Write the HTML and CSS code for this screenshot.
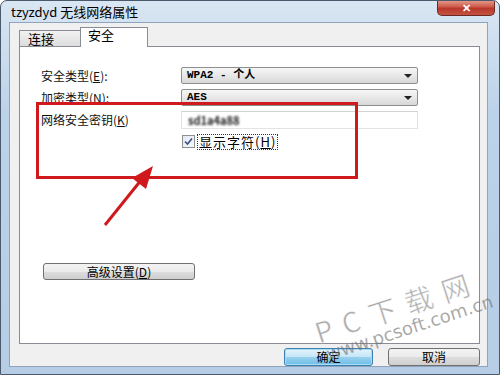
FILE: index.html
```html
<!DOCTYPE html>
<html lang="zh-CN">
<head>
    <meta charset="UTF-8">
    <title>tzyzdyd 无线网络属性</title>
    <link rel="stylesheet" href="styles.css">
</head>
<body>
    <div class="window">
        <div class="title-bar">
            <span class="title">tzyzdyd 无线网络属性</span>
            <button class="close-btn">&#x2715;</button>
        </div>
        <div class="client">
            <div class="tabs">
                <div class="tab">连接</div>
                <div class="tab active">安全</div>
            </div>
            <div class="panel">
                <div class="form">
                    <label class="label">安全类型(<u>E</u>):</label>
                    <div class="select">WPA2 - 个人<span class="caret"></span></div>
                    <label class="label">加密类型(<u>N</u>):</label>
                    <div class="select">AES<span class="caret"></span></div>
                    <label class="label">网络安全密钥(<u>K</u>)</label>
                    <div class="textbox"><span class="blurred">sd1a4a88</span></div>
                    <span></span>
                    <div class="check-row">
                        <span class="checkbox">
                            <svg width="9" height="9" viewBox="0 0 9 9"><path d="M1 4.5 L3.5 7 L8 1.5" fill="none" stroke="#3a4f8a" stroke-width="1.6"/></svg>
                        </span>
                        <span class="check-label">显示字符(<u>H</u>)</span>
                    </div>
                </div>
                <button class="btn advanced">高级设置(<u>D</u>)</button>

                <!-- annotation -->
                <div class="highlight"></div>
                <svg class="arrow" width="70" height="70" viewBox="0 0 70 70">
                    <line x1="5" y1="63" x2="42" y2="17" stroke="#d0191c" stroke-width="3"/>
                    <polygon points="53,4 46,27 32,16" fill="#d0191c"/>
                </svg>
            </div>
            <div class="footer">
                <button class="btn primary">确定</button>
                <button class="btn">取消</button>
            </div>
        </div>
        <div class="watermark">
            <span class="wm-big">P C 下 载 网</span>
            <span class="wm-small">www.pcsoft.com.cn</span>
        </div>
    </div>
</body>
</html>
```

FILE: styles.css
```css
body {
    margin: 0;
    background: #fff;
    font-family: "Noto Sans CJK SC", "DejaVu Sans", sans-serif;
    font-size: 12px;
    color: #000;
}
.window {
    position: relative;
    box-sizing: border-box;
    width: 500px;
    height: 375px;
    padding: 0 11px 7px 8px;
    border: 1px solid #4a5a6c;
    border-radius: 7px 7px 0 0;
    background: linear-gradient(180deg, #d9e6f3 0%, #bcd2e9 30%, #b7cde5 100%);
    display: flex;
    flex-direction: column;
    overflow: hidden;
}
.title-bar {
    height: 21px;
    display: flex;
    align-items: flex-start;
    justify-content: space-between;
}
.title {
    padding: 3px 0 0 2px;
    font-size: 13px;
    line-height: 15px;
}
.close-btn {
    width: 58px;
    height: 16px;
    margin: -1px -7px 0 0;
    border: 1px solid #6b2a25;
    border-top: none;
    border-radius: 0 0 5px 5px;
    background: linear-gradient(180deg, #e3a090 0%, #cf5a4b 45%, #b9382c 55%, #c4523f 100%);
    color: #fff;
    font-size: 11px;
    font-weight: bold;
    line-height: 14px;
    padding: 0;
}
.client {
    flex: 1;
    display: flex;
    flex-direction: column;
    background: #f0f0f0;
    border: 1px solid #8ea4bd;
    padding: 4px 7px 0 9px;
}
.tabs {
    display: flex;
    align-items: flex-end;
    height: 19px;
}
.tab {
    box-sizing: border-box;
    height: 16px;
    width: 62px;
    padding-left: 8px;
    line-height: 16px;
    font-size: 13px;
    border: 1px solid #898c95;
    border-bottom: none;
    background: linear-gradient(180deg, #f2f2f2, #dcdcdc);
}
.tab.active {
    position: relative;
    height: 20px;
    width: 68px;
    margin-left: -1px;
    margin-bottom: -1px;
    padding-left: 7px;
    line-height: 14px;
    background: #fff;
    z-index: 1;
}
.panel {
    position: relative;
    flex: 1;
    background: #fff;
    border: 1px solid #898c95;
    padding: 20px 0 0 21px;
}
.form {
    display: grid;
    grid-template-columns: 140px 237px;
    grid-auto-rows: 17px;
    row-gap: 5px;
    align-items: center;
}
.label {
    font-size: 12px;
    line-height: 14px;
    color: #111;
}
.select {
    position: relative;
    box-sizing: border-box;
    height: 17px;
    padding-left: 5px;
    line-height: 15px;
    font-family: "Liberation Mono", "Noto Sans CJK SC", monospace;
    font-size: 11px;
    font-weight: bold;
    border: 1px solid #8e8f8f;
    border-radius: 2px;
    background: linear-gradient(180deg, #f6f6f6 0%, #e8e8e8 50%, #d8d8d8 100%);
}
.caret {
    position: absolute;
    right: 5px;
    top: 6px;
    border-left: 4px solid transparent;
    border-right: 4px solid transparent;
    border-top: 4px solid #222;
}
.textbox {
    box-sizing: border-box;
    height: 18px;
    padding-left: 6px;
    border: 1px solid #e3e3e3;
    border-top-color: #d3d3d3;
    line-height: 16px;
}
.blurred {
    color: #222;
    font-size: 11px;
    font-weight: bold;
    filter: blur(1.3px);
}
.check-row {
    display: flex;
    align-items: center;
    gap: 3px;
    padding-left: 1px;
}
.checkbox {
    box-sizing: border-box;
    width: 13px;
    height: 13px;
    border: 1px solid #8f8f8f;
    background: linear-gradient(135deg, #dfe9f5, #f7fafd);
    display: flex;
    align-items: center;
    justify-content: center;
}
.check-label {
    font-size: 13px;
    line-height: 14px;
    letter-spacing: 1px;
    padding: 0 1px;
    outline: 1px dotted #333;
}
.btn {
    box-sizing: border-box;
    height: 17px;
    border: 1px solid #707070;
    border-radius: 3px;
    background: linear-gradient(180deg, #f3f3f3 0%, #ebebeb 50%, #dddddd 51%, #cfcfcf 100%);
    font-family: inherit;
    font-size: 12px;
    line-height: 14px;
    padding: 0;
    color: #000;
}
.btn.advanced {
    display: block;
    width: 152px;
    margin: 113px 0 0 2px;
}
.footer {
    display: flex;
    justify-content: flex-end;
    gap: 15px;
    padding: 4px 0 0 0;
}
.footer .btn {
    width: 92px;
    height: 18px;
}
.btn.primary {
    width: 89px;
    border-color: #3c7fb1;
    background: linear-gradient(180deg, #e5f4fc 0%, #c4e5f6 50%, #98d1ef 51%, #6fbde6 100%);
    box-shadow: inset 0 0 0 1px #a8ddf5;
}
.highlight {
    position: absolute;
    left: 16px;
    top: 55px;
    width: 316px;
    height: 71px;
    border: 3px solid #d0191c;
}
.arrow {
    position: absolute;
    left: 80px;
    top: 115px;
}
.watermark {
    position: absolute;
    left: 310px;
    top: 318px;
    transform: rotate(-18deg);
    transform-origin: left top;
    color: rgba(110, 110, 110, 0.6);
    pointer-events: none;
    display: flex;
    flex-direction: column;
    line-height: 1;
    white-space: nowrap;
}
.wm-big {
    font-size: 28px;
    letter-spacing: 2px;
    -webkit-text-stroke: 1px rgba(255, 255, 255, 0.6);
}
.wm-small {
    font-family: "DejaVu Sans", sans-serif;
    font-size: 18px;
    margin: 2px 0 0 4px;
}
```
